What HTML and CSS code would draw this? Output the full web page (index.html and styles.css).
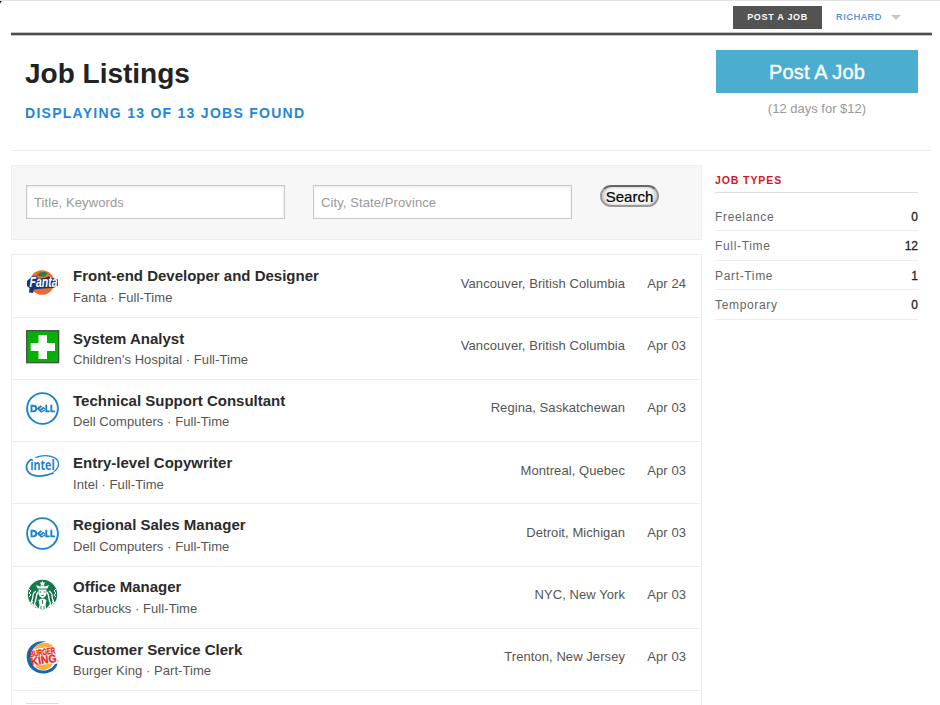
FILE: index.html
```html
<!DOCTYPE html>
<html lang="en">
<head>
<meta charset="utf-8">
<title>Job Listings</title>
<link rel="stylesheet" href="styles.css">
</head>
<body>
<header class="topbar">
  <a class="topbar-post">POST A JOB</a>
  <a class="user">RICHARD</a>
  <span class="caret"></span>
</header>
<div class="intro">
  <div>
    <h1>Job Listings</h1>
    <p class="count">DISPLAYING 13 OF 13 JOBS FOUND</p>
  </div>
  <div class="cta">
    <a class="cta-button">Post A Job</a>
    <p class="price">(12 days for $12)</p>
  </div>
</div>
<div class="columns">
  <main>
    <form class="search">
      <input type="text" placeholder="Title, Keywords">
      <input type="text" placeholder="City, State/Province">
      <button type="button">Search</button>
    </form>
    <div class="jobs">
      <article class="job">
        <svg class="logo" viewBox="0 0 34 34">
          <circle cx="16" cy="14.500" r="12.300" fill="#ed6b33"/>
          <path d="M11 7.300C13 3.500 19 3 21.500 5.200 20 8.800 15 9.500 11 7.300Z" fill="#218343"/>
          <path d="M1 13 6 8.500 11 8.300 12 11 18 10 23 8.500 28 10.500 32 11.500 32 18 27 20 17 20.500 8 21.500 7 25 3 24.500 3.500 20 1 18Z" fill="#17366f"/>
          <text x="3.500" y="19.300" class="fanta-text" textLength="28" lengthAdjust="spacingAndGlyphs">Fanta</text>
        </svg>
        <div class="info"><h2>Front-end Developer and Designer</h2><p>Fanta · Full-Time</p></div>
        <span class="place">Vancouver, British Columbia</span><span class="date">Apr 24</span>
      </article>
      <article class="job">
        <svg class="logo" viewBox="0 0 34 34">
          <rect x=".7" y=".7" width="32" height="32" fill="#06b006" stroke="#3d473d" stroke-width="1.2"/>
          <path d="M12.500 5H21V13H29V21H21V29H12.500V21H4.700V13H12.500Z" fill="#fff"/>
        </svg>
        <div class="info"><h2>System Analyst</h2><p>Children's Hospital · Full-Time</p></div>
        <span class="place">Vancouver, British Columbia</span><span class="date">Apr 03</span>
      </article>
      <article class="job">
        <svg class="logo" viewBox="0 0 34 34">
          <g id="dell">
            <circle cx="16.500" cy="16.500" r="15.400" fill="#fff" stroke="#1c83c6" stroke-width="1.900"/>
            <path d="M5.500 13.800V19.400H7.300Q10.300 19.200 10.300 16.600T7.300 13.800ZM20.300 12.800V19.400H23.700M25.300 12.800V19.400H29" fill="none" stroke="#1c83c6" stroke-width="1.900"/>
            <path d="M10.500 16.600 14.700 13.300 16.200 14.500 13.400 16.700 14 17.200 17.200 14.700 19.200 16.200 19.200 17.500 17.700 16.700 15 18.900 15.500 19.300 19.200 17.300V18.800L15.200 20.700Z" fill="#1c83c6"/>
          </g>
        </svg>
        <div class="info"><h2>Technical Support Consultant</h2><p>Dell Computers · Full-Time</p></div>
        <span class="place">Regina, Saskatchewan</span><span class="date">Apr 03</span>
      </article>
      <article class="job">
        <svg class="logo" viewBox="0 0 34 34">
          <g fill="none" stroke="#1c83c6" stroke-linecap="round">
            <path d="M10 2.300C20-1 32 1 32.500 8.500 32.600 12 31 14.500 28 16.500" stroke-width="1.300"/>
            <path d="M5 4.500C-1 8.500-.5 15 3.500 18.300 9 22.500 19 21.800 27 18" stroke-width="1.700"/>
          </g>
          <text x="4.200" y="14.800" class="intel-text" textLength="24.500" lengthAdjust="spacingAndGlyphs">intel</text>
        </svg>
        <div class="info"><h2>Entry-level Copywriter</h2><p>Intel · Full-Time</p></div>
        <span class="place">Montreal, Quebec</span><span class="date">Apr 03</span>
      </article>
      <article class="job">
        <svg class="logo" viewBox="0 0 34 34"><use href="#dell"/></svg>
        <div class="info"><h2>Regional Sales Manager</h2><p>Dell Computers · Full-Time</p></div>
        <span class="place">Detroit, Michigan</span><span class="date">Apr 03</span>
      </article>
      <article class="job">
        <svg class="logo" viewBox="0 0 34 34">
          <circle cx="16.500" cy="15.500" r="14.700" fill="#16764c"/>
          <g fill="none" stroke="#fff">
            <path d="M10 12C5 15 8 18 6 21S7 26 9 28M12 13C9 17 11 20 9 23S11 28 12 30M23 12C28 15 25 18 27 21S26 26 24 28M21 13C24 17 22 20 24 23S22 28 21 30" stroke-width="1.300"/>
            <path d="M3 10 5 12 3 14 5 16 3 18M30 10 28 12 30 14 28 16 30 18M7 22 4 24M26 22 29 24" stroke-width="1"/>
          </g>
          <path d="M16.500 1.500 17.300 3.500 19.500 3.500 18 5 18.500 7 16.500 6 14.500 7 15 5 13.500 3.500 15.700 3.500ZM10 6 14 7.500 16.500 6.500 19 7.500 23 6 21.500 9.500H11.500Z" fill="#fff"/>
          <path d="M12.500 10.500H20.500V15Q19.500 18.500 16.500 19 13.500 18.500 12.500 15ZM12.500 21Q16.500 18 20.500 21L19.500 26 20.500 30H12.500L13.500 26Z" fill="#fff"/>
          <path d="M13.500 13H15.500M17.500 13H19.500M15.300 16.500H17.700M16.500 21V25M15 27V30M18 27V30" fill="none" stroke="#16764c" stroke-width=".9"/>
        </svg>
        <div class="info"><h2>Office Manager</h2><p>Starbucks · Full-Time</p></div>
        <span class="place">NYC, New York</span><span class="date">Apr 03</span>
      </article>
      <article class="job">
        <svg class="logo" viewBox="0 0 34 34">
          <path d="M20 .5C8-1.500 0 7 .7 17 1.500 28 11 33.500 19 32.500 26 31.500 30.500 28 31.500 22.500L29 23C25 29.500 17 31.500 10.500 27.500 1 21.500 2 4 20 .5Z" fill="#1268b1"/>
          <path d="M7.500 8C11 .5 24 0 27 5.500ZM8.500 24.500 26.500 22.500C24 30.500 13 31 8.500 24.500Z" fill="#f9b040"/>
          <g transform="rotate(-9 17 16)" class="bk-text">
            <text x="4" y="14.300" font-size="9" textLength="26" lengthAdjust="spacingAndGlyphs">BURGER</text>
            <text x="4" y="22.800" font-size="11" textLength="26" lengthAdjust="spacingAndGlyphs">KING</text>
          </g>
          <circle cx="31.600" cy="20" r=".9" fill="none" stroke="#e88b7b" stroke-width=".6"/>
        </svg>
        <div class="info"><h2>Customer Service Clerk</h2><p>Burger King · Part-Time</p></div>
        <span class="place">Trenton, New Jersey</span><span class="date">Apr 03</span>
      </article>
      <span class="logo-blank"></span>
    </div>
  </main>
  <aside>
    <h3>JOB TYPES</h3>
    <ul>
      <li><span>Freelance</span><b>0</b></li>
      <li><span>Full-Time</span><b>12</b></li>
      <li><span>Part-Time</span><b>1</b></li>
      <li><span>Temporary</span><b>0</b></li>
    </ul>
  </aside>
</div>
</body>
</html>
```
FILE: styles.css
```css
* { box-sizing: border-box; }
html { background: radial-gradient(circle at 5px 5px, transparent 4.5px, #111 5.5px) 0 0 / 4px 4px no-repeat #fff; }
body {
  margin: 0;
  padding: 0 8px 0 11px;
  border-top: 1px solid #e2e2e2;
  font: 13px/16px "Liberation Sans", Arial, sans-serif;
  color: #555;
}
h1, h2, h3, p, ul { margin: 0; padding: 0; }

.topbar {
  display: flex;
  justify-content: flex-end;
  align-items: center;
  height: 34px;
  padding: 0 31px 0 0;
  border-bottom: 2px solid #4d4d4d;
  box-shadow: 0 1px #c4c4c4, inset 0 -1px #c4c4c4;
  font-size: 9px;
  letter-spacing: .7px;
}
.topbar-post {
  width: 89px;
  height: 23px;
  line-height: 23px;
  background: #535353;
  color: #fff;
  font-weight: bold;
  text-align: center;
}
.user { margin-left: 14px; color: #3f7fdc; -webkit-text-stroke: .2px #3f7fdc; }
.caret {
  margin-left: 9px;
  border: 5px solid transparent;
  border-top-color: #c8c8c8;
  border-bottom: 0;
}

.intro {
  display: flex;
  justify-content: space-between;
  height: 116px;
  padding: 15px 14px 0 14px;
  border-bottom: 1px solid #eee;
}
h1 { margin-top: 8px; font-size: 28px; line-height: 32px; color: #222; }
.count {
  margin-top: 15px;
  color: #1f88d6;
  font-size: 14px;
  font-weight: bold;
  letter-spacing: 1.27px;
}
.cta { width: 202px; text-align: center; }
.cta-button {
  display: block;
  height: 43px;
  line-height: 44px;
  background: #4badd0;
  color: #fff;
  font-size: 20px;
  letter-spacing: .15px;
  -webkit-text-stroke: .4px #fff;
}
.price { margin-top: 8px; color: #999; }

.columns { display: flex; margin-top: 14px; }
main { width: 691px; }
.search {
  display: flex;
  align-items: flex-start;
  height: 75px;
  padding: 19px 14px;
  background: #f7f7f7;
  border: 1px solid #eee;
}
.search input {
  width: 259px;
  height: 34px;
  margin: 0 28px 0 0;
  padding: 0 7px;
  border: 1px solid #c8c8c8;
  border-radius: 0;
  background: #fff;
  box-shadow: inset 0 1px 3px #e8e8e8;
  font: inherit;
  letter-spacing: .1px;
}
.search input::placeholder { color: #999; opacity: 1; }
.search button {
  width: 59px;
  height: 22px;
  padding: 0;
  border: 2px solid #999;
  border-top-color: #666;
  border-radius: 11px;
  background: linear-gradient(#fff, #eee 50%, #fff);
  box-shadow: inset 2px 0 3px #ccc, inset -2px 0 3px #ccc;
  font: 15px/17px "Liberation Sans", Arial, sans-serif;
  color: #000;
  -webkit-text-stroke: .2px #000;
}

.jobs {
  height: 451px;
  margin-top: 14px;
  padding-top: .7px;
  border: 1px solid #eee;
  border-bottom: 0;
}
.job {
  display: flex;
  height: 62.200px;
  padding: 12.400px 15px 0 14px;
  border-bottom: 1px solid #eee;
}
.logo { width: 34px; height: 34px; flex: none; overflow: visible; }
.info { flex: 1; margin-left: 13px; }
h2 { margin-top: -.6px; color: #2b2b2b; font-size: 15px; line-height: 18px; }
.info p { margin-top: 4.600px; letter-spacing: .06px; }
.place, .date { margin-top: 8px; letter-spacing: .07px; }
.date { width: 61px; text-align: right; }
.logo-blank { display: block; width: 33px; height: 1px; margin: 12px 0 0 14px; background: #ddd; }

.fanta-text { font: italic bold 14px "Liberation Sans", sans-serif; fill: #fff; }
.intel-text { font: bold 13.500px "Open Sans", sans-serif; fill: #1c83c6; }
.bk-text { font-family: "Liberation Sans", sans-serif; font-weight: bold; fill: #e52a27; stroke: #e52a27; stroke-width: .4px; }

aside { width: 203px; margin-left: 13px; padding-top: 8px; font-size: 12px; }
h3 {
  height: 20px;
  line-height: 15px;
  border-bottom: 1px solid #ddd;
  color: #d3172a;
  font-size: 10.500px;
  letter-spacing: .9px;
}
ul { margin-top: 9px; list-style: none; }
li {
  display: flex;
  justify-content: space-between;
  height: 29.400px;
  line-height: 30px;
  border-bottom: 1px solid #eee;
}
li span { color: #666; letter-spacing: .66px; }
li b { color: #222; font-weight: normal; -webkit-text-stroke: .3px #222; }
```
